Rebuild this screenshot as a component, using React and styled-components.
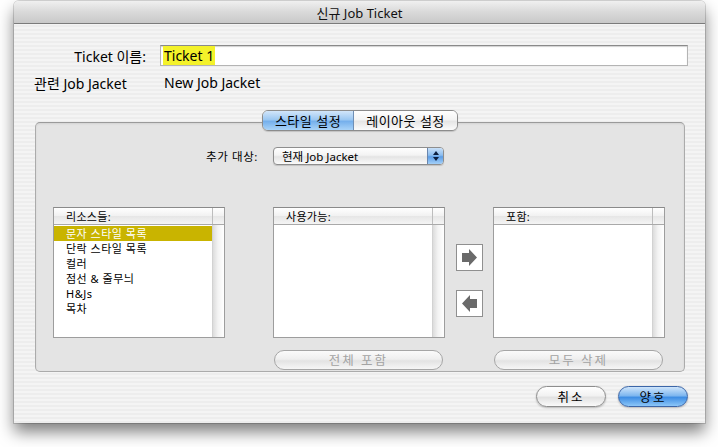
import React from 'react';
import styled, { createGlobalStyle, css } from 'styled-components';

const FONT = `"Lucida Grande", "Noto Sans", "Noto Sans CJK KR", sans-serif`;

const Global = createGlobalStyle`
  html, body { margin: 0; padding: 0; background: #fff; }
  body { font-family: ${FONT}; color: #000; }
  * { box-sizing: border-box; }
`;

const Page = styled.div`
  width: 718px;
  height: 447px;
  padding: 1px 0 0 14px;
  overflow: hidden;
`;

const Window = styled.div`
  width: 691px;
  height: 422px;
  display: flex;
  flex-direction: column;
  border-radius: 5px 5px 0 0;
  background: repeating-linear-gradient(to bottom, #ededed 0 2px, #f4f4f4 2px 4px);
  box-shadow: 0 9px 16px rgba(0, 0, 0, 0.5), 0 0 0 1px rgba(0, 0, 0, 0.15);
`;

const TitleBar = styled.div`
  height: 23px;
  flex: none;
  border-radius: 5px 5px 0 0;
  background: linear-gradient(to bottom, #f0f0f0, #d9d9d9 50%, #c9c9c9);
  border-bottom: 1px solid #7b7b7b;
  display: flex;
  align-items: center;
  justify-content: center;
  font-size: 13px;
  color: #111;
`;

const Body = styled.div`
  flex: 1;
  display: flex;
  flex-direction: column;
  padding-top: 21px;
`;

const TicketRow = styled.div`
  display: flex;
  align-items: center;
  height: 21px;
`;

const RowLabel = styled.div`
  width: ${(p) => p.$w}px;
  text-align: ${(p) => p.$align || 'left'};
  margin-right: ${(p) => p.$mr || 0}px;
  font-size: 14px;
  white-space: nowrap;
`;

const TextField = styled.div`
  width: 528px;
  height: 21px;
  background: #fff;
  border: 1px solid #b4b4b4;
  border-top-color: #8a8a8a;
  box-shadow: inset 0 1px 1px rgba(0, 0, 0, 0.18);
  display: flex;
  align-items: center;
  padding-left: 2px;
  font-size: 14px;
`;

const Selected = styled.span`
  background: #f4f22a;
  padding: 0 1px;
`;

const JacketRow = styled.div`
  display: flex;
  align-items: center;
  height: 17px;
  margin-top: 8px;
  padding-left: 20px;
`;

const TabArea = styled.div`
  margin: 19px 0 0 21px;
  width: 650px;
  display: flex;
  flex-direction: column;
`;

const TabBar = styled.div`
  display: flex;
  justify-content: center;
  position: relative;
  z-index: 1;
`;

const Segmented = styled.div`
  display: flex;
  height: 21px;
  border: 1px solid #8c8c8c;
  border-radius: 6px;
  overflow: hidden;
  box-shadow: 0 1px 1px rgba(0, 0, 0, 0.15);
`;

const Seg = styled.div`
  width: ${(p) => p.$w}px;
  display: flex;
  align-items: center;
  justify-content: center;
  font-size: 13px;
  letter-spacing: 0.5px;
  ${(p) =>
    p.$active
      ? css`
          background: linear-gradient(to bottom, #d2e6fa 0%, #9cc8f2 45%, #76b0ec 55%, #a9d3f8 100%);
          border-right: 1px solid #6f8fb5;
        `
      : css`
          background: linear-gradient(to bottom, #ffffff 0%, #f4f4f4 45%, #e6e6e6 55%, #fbfbfb 100%);
        `}
`;

const Panel = styled.div`
  margin-top: -9px;
  height: 250px;
  border: 1px solid #ababab;
  border-top-color: #9a9a9a;
  border-radius: 5px;
  background: #e4e4e4;
  box-shadow: inset 0 1px 2px rgba(0, 0, 0, 0.08);
  padding: 24px 0 0 17px;
  display: grid;
  grid-template-columns: 172px 48px 172px 48px 172px;
  grid-template-rows: 18px auto auto;
  align-items: start;
`;

const TargetLabel = styled.div`
  grid-column: 1 / 3;
  justify-self: end;
  align-self: center;
  margin-right: 15px;
  font-size: 11.5px;
  letter-spacing: 0.6px;
`;

const Popup = styled.div`
  grid-column: 3;
  height: 18px;
  width: 171px;
  border: 1px solid #8e8e8e;
  border-radius: 4px;
  background: linear-gradient(to bottom, #ffffff 0%, #f3f3f3 45%, #e4e4e4 55%, #fafafa 100%);
  display: flex;
  align-items: center;
  overflow: hidden;
  box-shadow: 0 1px 1px rgba(0, 0, 0, 0.15);
`;

const PopupText = styled.div`
  flex: 1;
  padding-left: 8px;
  font-size: 11.5px;
`;

const Stepper = styled.div`
  width: 16px;
  height: 100%;
  border-left: 1px solid #6a86ad;
  background: linear-gradient(to bottom, #c9e0f8 0%, #8cbdef 45%, #5c9de6 55%, #a4d0f8 100%);
  display: flex;
  align-items: center;
  justify-content: center;
`;

const ListBox = styled.div`
  grid-row: 2;
  grid-column: ${(p) => p.$col};
  margin-top: 42px;
  height: 131px;
  border: 1px solid #9d9d9d;
  border-top-color: #8a8a8a;
  background: #fff;
  display: flex;
  flex-direction: column;
`;

const ListHeader = styled.div`
  height: 17px;
  flex: none;
  display: flex;
  border-bottom: 1px solid #a9a9a9;
  background: linear-gradient(to bottom, #ffffff, #f1f1f1 50%, #e6e6e6 51%, #f4f4f4);
`;

const HeaderCell = styled.div`
  flex: 1;
  font-size: 11px;
  padding-left: 12px;
  display: flex;
  align-items: center;
  letter-spacing: 0.3px;
`;

const HeaderCorner = styled.div`
  width: 12px;
  border-left: 1px solid #bdbdbd;
`;

const ListBody = styled.div`
  flex: 1;
  display: flex;
  min-height: 0;
`;

const Items = styled.div`
  flex: 1;
  padding-top: 1px;
`;

const Track = styled.div`
  width: 12px;
  border-left: 1px solid #d2d2d2;
  background: linear-gradient(to right, #dcdcdc, #f3f3f3 45%, #ffffff);
`;

const Item = styled.div`
  height: 15px;
  line-height: 15px;
  font-size: 11px;
  padding-left: 12px;
  letter-spacing: 0.5px;
  white-space: nowrap;
  ${(p) =>
    p.$sel &&
    css`
      background: #c9b400;
      color: #fff;
    `}
`;

const ArrowCol = styled.div`
  grid-row: 2;
  grid-column: 4;
  margin-top: 42px;
  padding-top: 37px;
  display: flex;
  flex-direction: column;
  align-items: center;
  gap: 19px;
`;

const ArrowButton = styled.div`
  width: 27px;
  height: 27px;
  background: #fff;
  border: 1px solid #8f8f8f;
  display: flex;
  align-items: center;
  justify-content: center;
`;

const Pill = styled.div`
  grid-row: 3;
  grid-column: ${(p) => p.$col};
  margin-top: 10px;
  margin-left: 1px;
  width: 169px;
  height: 20px;
  border-radius: 10px;
  border: 1px solid #a6a6a6;
  background: linear-gradient(to bottom, #fbfbfb 0%, #efefef 45%, #e3e3e3 55%, #f6f6f6 100%);
  display: flex;
  align-items: center;
  justify-content: center;
  font-size: 12.5px;
  letter-spacing: 2px;
  color: #a3a3a3;
`;

const Footer = styled.div`
  display: flex;
  justify-content: flex-end;
  gap: 12px;
  padding: 14px 17px 0 0;
`;

const Button = styled.div`
  width: 70px;
  height: 21px;
  border-radius: 11px;
  display: flex;
  align-items: center;
  justify-content: center;
  font-size: 12.5px;
  letter-spacing: 2px;
  box-shadow: 0 1px 2px rgba(0, 0, 0, 0.25);
  ${(p) =>
    p.$primary
      ? css`
          border: 1px solid #3c66a8;
          background: linear-gradient(to bottom, #cfe5fb 0%, #7fb7ef 45%, #3f8ee4 55%, #8cc6f8 100%);
        `
      : css`
          border: 1px solid #8d8d8d;
          background: linear-gradient(to bottom, #ffffff 0%, #f2f2f2 45%, #e2e2e2 55%, #fafafa 100%);
        `}
`;

const ArrowIcon = ({ dir }) => (
  <svg width="17" height="19" viewBox="0 0 17 19">
    <polygon
      points="1,5 8,5 8,1 16,9.5 8,18 8,14 1,14"
      fill="#6a6a6a"
      transform={dir === 'left' ? 'translate(17,0) scale(-1,1)' : undefined}
    />
  </svg>
);

const StepperIcon = () => (
  <svg width="8" height="12" viewBox="0 0 8 12">
    <polygon points="4,1 7,5 1,5" fill="#0c1f3f" />
    <polygon points="1,7 7,7 4,11" fill="#0c1f3f" />
  </svg>
);

const List = ({ col, title, items = [], selected }) => (
  <ListBox $col={col}>
    <ListHeader>
      <HeaderCell>{title}</HeaderCell>
      <HeaderCorner />
    </ListHeader>
    <ListBody>
      <Items>
        {items.map((it, i) => (
          <Item key={it} $sel={i === selected}>
            {it}
          </Item>
        ))}
      </Items>
      <Track />
    </ListBody>
  </ListBox>
);

export default function App() {
  return (
    <>
      <Global />
      <Page>
        <Window>
          <TitleBar>신규 Job Ticket</TitleBar>
          <Body>
            <TicketRow>
              <RowLabel $w={132} $align="right" $mr={14}>
                Ticket 이름:
              </RowLabel>
              <TextField>
                <Selected>Ticket 1</Selected>
              </TextField>
            </TicketRow>
            <JacketRow>
              <RowLabel $w={130}>관련 Job Jacket</RowLabel>
              <RowLabel $w={200}>New Job Jacket</RowLabel>
            </JacketRow>
            <TabArea>
              <TabBar>
                <Segmented>
                  <Seg $w={91} $active>
                    스타일 설정
                  </Seg>
                  <Seg $w={103}>레이아웃 설정</Seg>
                </Segmented>
              </TabBar>
              <Panel>
                <TargetLabel>추가 대상:</TargetLabel>
                <Popup>
                  <PopupText>현재 Job Jacket</PopupText>
                  <Stepper>
                    <StepperIcon />
                  </Stepper>
                </Popup>
                <List
                  col={1}
                  title="리소스들:"
                  items={['문자 스타일 목록', '단락 스타일 목록', '컬러', '점선 & 줄무늬', 'H&Js', '목차']}
                  selected={0}
                />
                <List col={3} title="사용가능:" />
                <ArrowCol>
                  <ArrowButton>
                    <ArrowIcon dir="right" />
                  </ArrowButton>
                  <ArrowButton>
                    <ArrowIcon dir="left" />
                  </ArrowButton>
                </ArrowCol>
                <List col={5} title="포함:" />
                <Pill $col={3}>전체 포함</Pill>
                <Pill $col={5}>모두 삭제</Pill>
              </Panel>
            </TabArea>
            <Footer>
              <Button>취소</Button>
              <Button $primary>양호</Button>
            </Footer>
          </Body>
        </Window>
      </Page>
    </>
  );
}
